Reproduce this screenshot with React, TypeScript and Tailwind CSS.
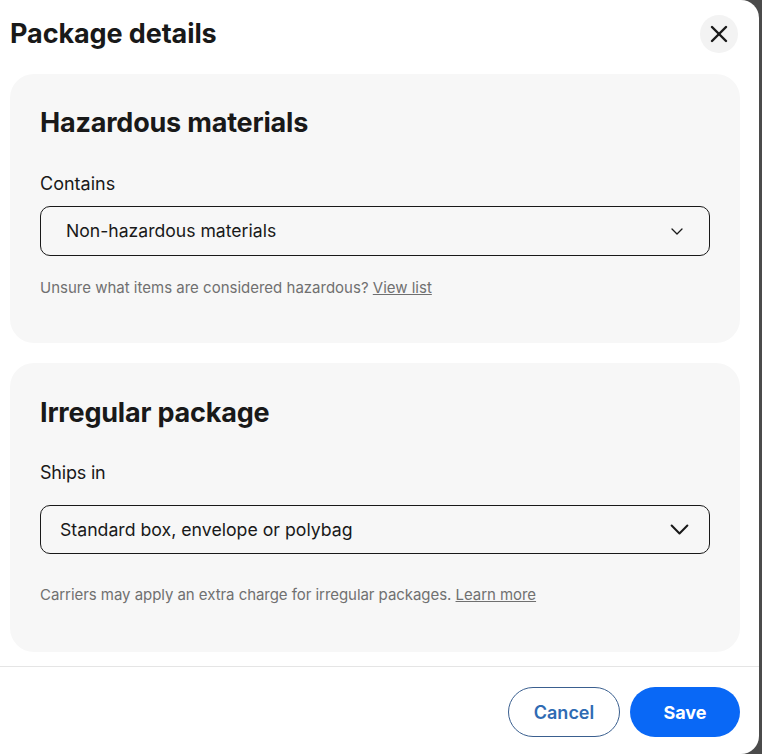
import { X } from "lucide-react";

function Chevron({ className }: { className: string }) {
  return (
    <svg viewBox="0 0 24 14" fill="none" className={className}>
      <path
        d="M2 2l10 10L22 2"
        stroke="#191919"
        strokeWidth="2.6"
        strokeLinecap="round"
        strokeLinejoin="round"
      />
    </svg>
  );
}

export default function App() {
  return (
    <div
      className="flex min-h-screen bg-[#4b4b4b]"
      style={{ fontFamily: "Inter, 'Noto Sans', sans-serif" }}
    >
      <div className="flex h-[754px] w-[759px] flex-col rounded-r-[18px] bg-white text-[#191919]">
        {/* Header */}
        <div className="mb-[21px] mt-[15px] flex h-[38px] items-center justify-between pl-[10px] pr-[21px]">
          <h1 className="text-[27px] font-bold leading-[34px] tracking-[-0.1px]">
            Package details
          </h1>
          <button className="flex h-[38px] w-[38px] items-center justify-center rounded-full bg-[#f3f3f3]">
            <X className="h-[28px] w-[28px]" strokeWidth={2.1} />
          </button>
        </div>

        <div className="flex flex-col gap-[20px] pl-[10px] pr-[19px]">
          {/* Hazardous materials */}
          <section className="flex h-[269px] flex-col rounded-[24px] bg-[#f7f7f7] px-[30px] pt-[32px]">
            <h2 className="text-[27px] font-bold leading-[34px] tracking-[-0.2px]">
              Hazardous materials
            </h2>
            <label className="mt-[32px] text-[18px] leading-[24px]">Contains</label>
            <div className="mt-[10px] flex h-[50px] items-center justify-between rounded-[10px] border border-[#191919] pl-[25px] pr-[26px]">
              <span className="text-[17.6px] leading-[24px]">Non-hazardous materials</span>
              <Chevron className="h-[7px] w-[12px]" />
            </div>
            <p className="mt-[20px] text-[15px] leading-[24px] text-[#707070]">
              Unsure what items are considered hazardous?{" "}
              <a className="underline">View list</a>
            </p>
          </section>

          {/* Irregular package */}
          <section className="flex h-[289px] flex-col rounded-[24px] bg-[#f7f7f7] px-[30px] pt-[33px]">
            <h2 className="text-[27px] font-bold leading-[34px] tracking-[-0.2px]">
              Irregular package
            </h2>
            <label className="mt-[31px] text-[18px] leading-[24px] tracking-[-0.2px]">
              Ships in
            </label>
            <div className="mt-[20px] flex h-[49px] items-center justify-between rounded-[10px] border border-[#191919] pl-[19px] pr-[20px]">
              <span className="text-[17.7px] leading-[24px]">
                Standard box, envelope or polybag
              </span>
              <Chevron className="h-[11px] w-[19px]" />
            </div>
            <p className="mt-[29px] text-[15px] leading-[24px] tracking-[-0.05px] text-[#707070]">
              Carriers may apply an extra charge for irregular packages.{" "}
              <a className="underline">Learn more</a>
            </p>
          </section>
        </div>

        {/* Footer */}
        <div className="mt-[14px] border-t border-[#e5e5e5]" />
        <div className="flex justify-end gap-[10px] pr-[19px] pt-[20px]">
          <button className="h-[50px] w-[112px] rounded-full border border-[#3a5f8f] text-[18px] font-semibold text-[#2f6bb3]">
            Cancel
          </button>
          <button className="h-[50px] w-[110px] rounded-full bg-[#0968f6] text-[18px] font-bold text-white">
            Save
          </button>
        </div>
      </div>
    </div>
  );
}
